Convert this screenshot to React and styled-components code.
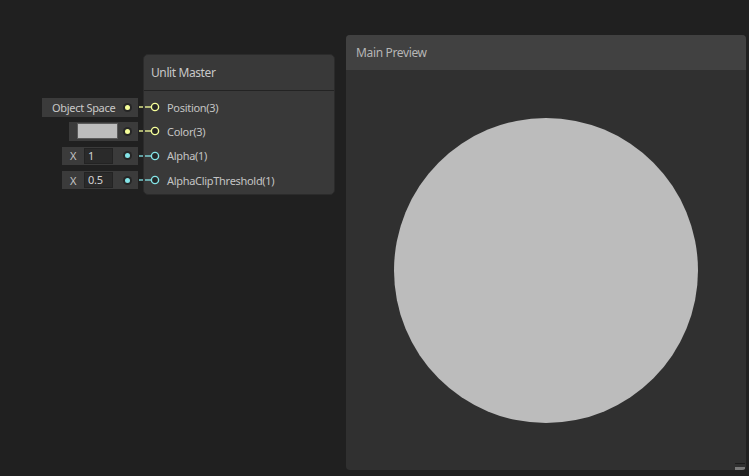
import React from "react";
import styled, { createGlobalStyle } from "styled-components";

const Global = createGlobalStyle`
  html, body { margin: 0; padding: 0; background: #202020; }
  body { font-family: "Noto Sans", "Open Sans", sans-serif; letter-spacing: -0.3px; }
`;

const YELLOW = "#f6ff9a";
const CYAN = "#84e4e7";

const Canvas = styled.div`
  width: 749px;
  height: 476px;
  overflow: hidden;
  background: #202020;
  display: flex;
  align-items: flex-start;
`;

const Graph = styled.div`
  display: flex;
  align-items: flex-start;
  gap: 5px;
  padding: 54px 0 0 42px;
`;

const Inputs = styled.div`
  width: 96px;
  margin-top: 41px;
  display: flex;
  flex-direction: column;
  align-items: flex-end;
`;

const Slot = styled.div`
  height: 24.3px;
  display: flex;
  align-items: center;
`;

const Field = styled.div`
  position: relative;
  height: ${(p) => p.$h || 19}px;
  width: ${(p) => p.$w}px;
  background: #3b3b3b;
  display: flex;
  align-items: center;
  box-sizing: border-box;
  padding-left: ${(p) => p.$pl || 0}px;
  color: #c9c9c9;
  font-size: 11px;
  &::after {
    content: "";
    position: absolute;
    right: -5px;
    top: 50%;
    width: 4px;
    height: 2px;
    margin-top: -1px;
    background: ${(p) => p.$c};
    opacity: 0.65;
  }
`;

const FieldText = styled.span`
  flex: 1;
  white-space: nowrap;
`;

const Dot = styled.span`
  width: 9px;
  height: 9px;
  border-radius: 50%;
  background: #262626;
  display: flex;
  align-items: center;
  justify-content: center;
  margin: 0 6px 0 auto;
  flex: none;
  &::before {
    content: "";
    width: 5px;
    height: 5px;
    border-radius: 50%;
    background: ${(p) => p.$c};
  }
`;

const Swatch = styled.div`
  width: 41px;
  height: 16px;
  box-sizing: border-box;
  background: #bdbdbd;
  border: 1px solid #5a5a5a;
  margin-left: 8px;
`;

const AxisLabel = styled.span`
  width: 22px;
  text-align: center;
  color: #c4c4c4;
  font-size: 11px;
  flex: none;
`;

const NumBox = styled.div`
  width: 29px;
  height: 16px;
  box-sizing: border-box;
  background: #2a2a2a;
  border: 1px solid #232323;
  color: #d2d2d2;
  font-size: 11px;
  line-height: 14px;
  padding-left: 3px;
  flex: none;
`;

const Node = styled.div`
  width: 192px;
  height: 141px;
  box-sizing: border-box;
  background: #393939;
  border: 1px solid #2b2b2b;
  border-radius: 5px;
  display: flex;
  flex-direction: column;
`;

const NodeHeader = styled.div`
  height: 35px;
  flex: none;
  border-bottom: 1px solid #232323;
  display: flex;
  align-items: center;
  padding-left: 7px;
  color: #c8c8c8;
  font-size: 12px;
  letter-spacing: -0.4px;
`;

const NodeBody = styled.div`
  padding: 4px 0 4px 0;
  display: flex;
  flex-direction: column;
  margin-left: -1px;
`;

const PortRow = styled.div`
  height: 24.3px;
  display: flex;
  align-items: center;
  color: #c4c4c4;
  font-size: 11px;
`;

const PortIcon = styled.svg`
  width: 22px;
  height: 12px;
  flex: none;
  margin-right: 2px;
`;

const Port = ({ color, label }) => (
  <PortRow>
    <PortIcon viewBox="0 0 22 12">
      <line x1="2" y1="6" x2="8" y2="6" stroke={color} strokeOpacity="0.65" strokeWidth="2" />
      <circle cx="12" cy="6" r="3.6" fill="#262626" stroke={color} strokeWidth="1.4" />
    </PortIcon>
    {label}
  </PortRow>
);

const Preview = styled.div`
  position: relative;
  margin: 35px 0 0 11px;
  width: 400px;
  height: 435px;
  border-radius: 4px;
  overflow: hidden;
  display: flex;
  flex-direction: column;
  background: #303030;
`;

const PreviewHeader = styled.div`
  height: 35px;
  flex: none;
  background: #414141;
  display: flex;
  align-items: center;
  padding-left: 10px;
  color: #b6b6b6;
  font-size: 12px;
  letter-spacing: -0.35px;
`;

const PreviewBody = styled.div`
  flex: 1;
  display: flex;
  align-items: center;
  justify-content: center;
`;

const Sphere = styled.div`
  width: 304px;
  height: 305px;
  border-radius: 50%;
  background: #bcbcbc;
`;

const ResizeHandle = styled.div`
  position: absolute;
  right: 1px;
  bottom: 0;
  width: 10px;
  height: 6px;
  border-top: 1px solid #1c1c1c;
  &::after {
    content: "";
    position: absolute;
    left: 0;
    right: 0;
    bottom: 0;
    height: 3px;
    background: #7a7a7a;
  }
`;

export default function App() {
  return (
    <>
      <Global />
      <Canvas>
        <Graph>
          <Inputs>
            <Slot>
              <Field $w={96} $pl={10} $c={YELLOW}>
                <FieldText>Object Space</FieldText>
                <Dot $c={YELLOW} />
              </Field>
            </Slot>
            <Slot>
              <Field $w={69} $c={YELLOW}>
                <Swatch />
                <Dot $c={YELLOW} />
              </Field>
            </Slot>
            <Slot>
              <Field $w={76} $h={18} $c={CYAN}>
                <AxisLabel>X</AxisLabel>
                <NumBox>1</NumBox>
                <Dot $c={CYAN} />
              </Field>
            </Slot>
            <Slot>
              <Field $w={76} $h={18} $c={CYAN}>
                <AxisLabel>X</AxisLabel>
                <NumBox>0.5</NumBox>
                <Dot $c={CYAN} />
              </Field>
            </Slot>
          </Inputs>
          <Node>
            <NodeHeader>Unlit Master</NodeHeader>
            <NodeBody>
              <Port color={YELLOW} label="Position(3)" />
              <Port color={YELLOW} label="Color(3)" />
              <Port color={CYAN} label="Alpha(1)" />
              <Port color={CYAN} label="AlphaClipThreshold(1)" />
            </NodeBody>
          </Node>
        </Graph>
        <Preview>
          <PreviewHeader>Main Preview</PreviewHeader>
          <PreviewBody>
            <Sphere />
          </PreviewBody>
          <ResizeHandle />
        </Preview>
      </Canvas>
    </>
  );
}
